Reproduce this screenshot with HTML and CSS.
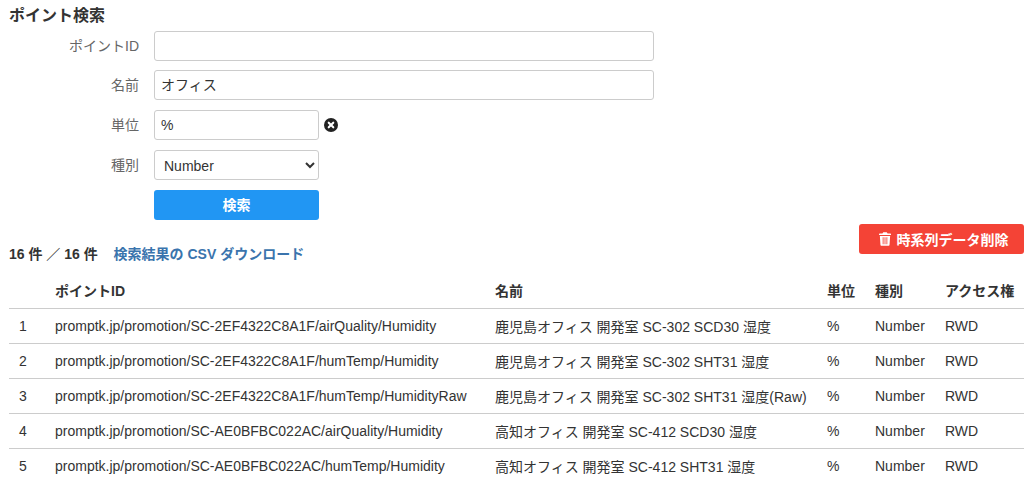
FILE: index.html
```html
<!DOCTYPE html>
<html lang="ja">
<head>
<meta charset="UTF-8">
<meta name="viewport" content="width=device-width, initial-scale=1.0">
<title>ポイント検索</title>
<link rel="stylesheet" href="styles.css">
</head>
<body>
<div class="container">
    <h2 class="page-title">ポイント検索</h2>
    <form class="search-form">
        <div class="form-row first">
            <label class="form-label">ポイントID</label>
            <input class="form-input wide" type="text">
        </div>
        <div class="form-row">
            <label class="form-label">名前</label>
            <input class="form-input wide" type="text" value="オフィス">
        </div>
        <div class="form-row">
            <label class="form-label">単位</label>
            <input class="form-input narrow" type="text" value="%">
            <svg class="clear-icon" viewBox="0 0 16 16" width="14" height="14">
                <circle cx="8" cy="8" r="8" fill="#222"/>
                <path d="M5.4 5.4l5.2 5.2M10.6 5.4l-5.2 5.2" stroke="#fff" stroke-width="2.4" stroke-linecap="round"/>
            </svg>
        </div>
        <div class="form-row">
            <label class="form-label">種別</label>
            <select class="form-input narrow form-select">
                <option>Number</option>
            </select>
        </div>
        <div class="form-row">
            <span class="form-label"></span>
            <button class="btn-search" type="button">検索</button>
        </div>
    </form>

    <div class="result-bar">
        <div class="result-info">
            <span class="result-count">16 件 ／ 16 件</span>
            <a class="result-link" href="#">検索結果の CSV ダウンロード</a>
        </div>
        <button class="btn-delete" type="button">
            <svg class="trash-icon" viewBox="0 0 14 16" width="12" height="14">
                <path fill="#fff" d="M5 0h4l1 1.5h3.2c.4 0 .8.4.8.8v.9H0v-.9c0-.4.4-.8.8-.8H4zM1 4.4h12l-.7 10.3c0 .7-.6 1.3-1.3 1.3H3c-.7 0-1.3-.6-1.3-1.3zM4.3 6v8h1V6zm2.2 0v8h1V6zm2.2 0v8h1V6z" fill-rule="evenodd"/>
            </svg>
            時系列データ削除
        </button>
    </div>

    <table class="result-table">
        <colgroup>
            <col class="col-no"><col class="col-id"><col class="col-name"><col class="col-unit"><col class="col-type"><col>
        </colgroup>
        <thead>
            <tr><th></th><th>ポイントID</th><th>名前</th><th>単位</th><th>種別</th><th>アクセス権</th></tr>
        </thead>
        <tbody>
            <tr><td>1</td><td>promptk.jp/promotion/SC-2EF4322C8A1F/airQuality/Humidity</td><td>鹿児島オフィス 開発室 SC-302 SCD30 湿度</td><td>%</td><td>Number</td><td>RWD</td></tr>
            <tr><td>2</td><td>promptk.jp/promotion/SC-2EF4322C8A1F/humTemp/Humidity</td><td>鹿児島オフィス 開発室 SC-302 SHT31 湿度</td><td>%</td><td>Number</td><td>RWD</td></tr>
            <tr><td>3</td><td>promptk.jp/promotion/SC-2EF4322C8A1F/humTemp/HumidityRaw</td><td>鹿児島オフィス 開発室 SC-302 SHT31 湿度(Raw)</td><td>%</td><td>Number</td><td>RWD</td></tr>
            <tr><td>4</td><td>promptk.jp/promotion/SC-AE0BFBC022AC/airQuality/Humidity</td><td>高知オフィス 開発室 SC-412 SCD30 湿度</td><td>%</td><td>Number</td><td>RWD</td></tr>
            <tr><td>5</td><td>promptk.jp/promotion/SC-AE0BFBC022AC/humTemp/Humidity</td><td>高知オフィス 開発室 SC-412 SHT31 湿度</td><td>%</td><td>Number</td><td>RWD</td></tr>
        </tbody>
    </table>
</div>
</body>
</html>
```

FILE: styles.css
```css
html, body {
    margin: 0;
    overflow: hidden;
}
body {
    font-family: "Liberation Sans", "Noto Sans CJK JP", sans-serif;
    font-size: 14px;
    color: #333;
    background: #fff;
}
.container {
    padding: 6px 3px 0 9px;
}
.page-title {
    margin: 0 0 5px;
    font-size: 16px;
    line-height: 20px;
    font-weight: bold;
}
.form-row {
    display: flex;
    align-items: center;
    height: 30px;
    margin-bottom: 10px;
}
.form-row.first {
    margin-bottom: 9px;
}
.form-label {
    width: 130px;
    margin-right: 15px;
    margin-top: -2px;
    text-align: right;
    color: #666;
}
.form-input {
    box-sizing: border-box;
    height: 30px;
    padding: 0 6px 2px;
    border: 1px solid #ccc;
    border-radius: 3px;
    font-family: inherit;
    font-size: 14px;
    color: #333;
    background: #fff;
}
.wide {
    width: 500px;
}
.narrow {
    width: 165px;
    padding-bottom: 0;
}
.form-select {
    padding: 1px 0 0 5px;
}
.clear-icon {
    margin-left: 5px;
}
.btn-search {
    width: 165px;
    height: 30px;
    padding: 0 0 2px;
    border: 0;
    border-radius: 3px;
    background: #2196f3;
    color: #fff;
    font-family: inherit;
    font-size: 14px;
    font-weight: bold;
}
.result-bar {
    display: flex;
    justify-content: space-between;
    align-items: flex-end;
    height: 30px;
    margin-top: -6px;
}
.result-info {
    line-height: 20px;
    font-weight: bold;
    margin-bottom: -10px;
}
.result-link {
    margin-left: 12px;
    color: #3a74ad;
    text-decoration: none;
}
.btn-delete {
    display: flex;
    align-items: center;
    justify-content: center;
    gap: 6px;
    width: 165px;
    height: 30px;
    padding: 0 0 0 4px;
    border: 0;
    border-radius: 3px;
    background: #f44336;
    color: #fff;
    font-family: inherit;
    font-size: 14px;
    font-weight: bold;
}
.result-table {
    width: 1015px;
    margin-top: 20px;
    border-collapse: collapse;
    table-layout: fixed;
}
.col-no {
    width: 36px;
}
.col-id {
    width: 440px;
}
.col-name {
    width: 332px;
}
.col-unit {
    width: 48px;
}
.col-type {
    width: 70px;
}
.result-table th, .result-table td {
    padding: 0 0 0 10px;
    border-bottom: 1px solid #ccc;
    text-align: left;
    white-space: nowrap;
}
.result-table td {
    padding-bottom: 1px;
    height: 33px;
}
.result-table th {
    height: 31px;
    padding-bottom: 3px;
    font-weight: bold;
}
```
